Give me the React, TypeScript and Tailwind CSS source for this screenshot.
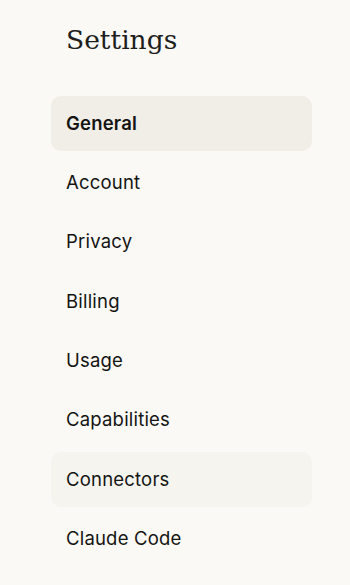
import React from "react";

const items = ["General", "Account", "Privacy", "Billing", "Usage", "Capabilities", "Connectors", "Claude Code"];

export default function App() {
  return (
    <div className="min-h-[585px] w-[350px] bg-[#faf9f5] text-[#141413]">
      <div className="pl-[51px] pr-[38px] pt-[20px]">
        <h1 className="pl-[15px] text-[26.5px] leading-[40px] text-[#1f1e1d]" style={{ fontFamily: '"DejaVu Serif", serif' }}>
          Settings
        </h1>
        <nav className="mt-[36px] flex flex-col gap-[4.33px]" style={{ fontFamily: 'Inter, "Liberation Sans", sans-serif' }}>
          {items.map((it, i) => (
            <div
              key={it}
              className={
                "flex h-[55px] items-center rounded-[10px] pl-[15px] text-[18.5px] tracking-[0.2px] " +
                (i === 0 ? "bg-[#f0eee6] font-semibold" : i === 6 ? "bg-[#f5f4ef]" : "")
              }
            >
              {it}
            </div>
          ))}
        </nav>
      </div>
    </div>
  );
}
